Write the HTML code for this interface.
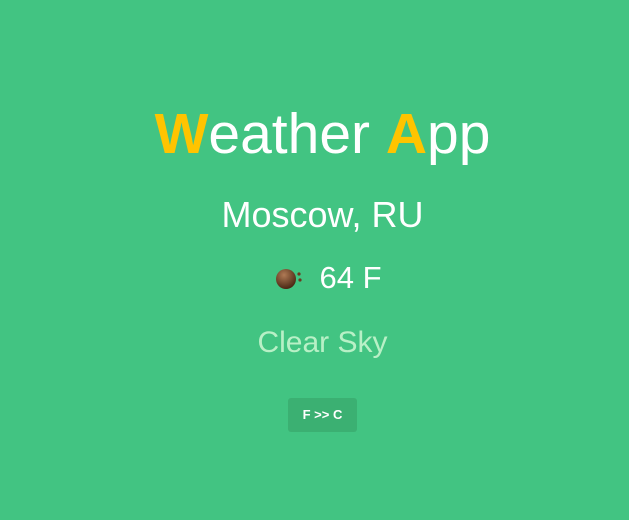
<!DOCTYPE html>
<html><head><style>
body{margin:0;width:629px;height:520px;background:#42c482;font-family:"Liberation Sans",Arial,sans-serif;color:#fff;position:relative;overflow:hidden}
.t{position:absolute;left:8px;width:629px;text-align:center;white-space:nowrap}
.y{color:#ffc400;font-weight:bold}
</style></head><body>
<div class="t" style="top:99px;font-size:57px;line-height:70px"><span class="y">W</span>eather <span class="y">A</span>pp</div>
<div class="t" style="top:194px;font-size:36px;line-height:42px">Moscow, RU</div>
<div class="t" style="top:259px;left:14px;font-size:31px;line-height:38px">
<svg width="30" height="26" viewBox="0 0 30 26" style="vertical-align:-3px;margin-right:14px"><defs><radialGradient id="g" cx="0.4" cy="0.3" r="0.7"><stop offset="0" stop-color="#b07a55"/><stop offset="1" stop-color="#4a2814"/></radialGradient></defs><circle cx="11" cy="14" r="10" fill="url(#g)"/><circle cx="24" cy="9" r="1.6" fill="#6a3a20"/><circle cx="25" cy="15" r="1.6" fill="#6a3a20"/></svg>64 F</div>
<div class="t" style="top:325px;font-size:30px;line-height:36px;color:#b8f0c6">Clear Sky</div>
<div style="position:absolute;left:288px;top:398px;width:69px;height:34px;background:#3bb072;border-radius:3px;font-size:13px;font-weight:bold;line-height:34px;text-align:center">F &gt;&gt; C</div>
</body></html>
